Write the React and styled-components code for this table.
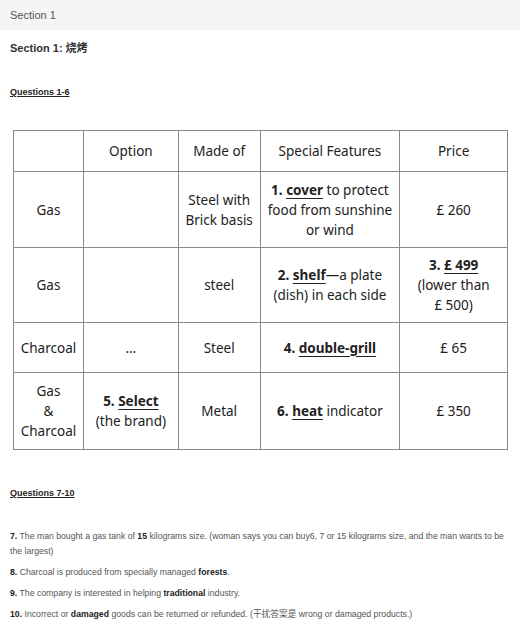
import React from 'react';
import styled, {createGlobalStyle} from 'styled-components';

const Global = createGlobalStyle`
  body {
    margin: 0;
    background: #fff;
    font-family: "Liberation Sans", Arial, "Noto Sans CJK SC", sans-serif;
  }
`

const TopBar = styled.div`
  height: 30px;
  background: #f5f5f5;
  display: flex;
  align-items: center;
  padding: 0 10px;
  font-size: 11px;
  color: #555;
`

const Body = styled.div`
  padding: 0 10px;
`

const Title = styled.div`
  font-size: 11px;
  font-weight: bold;
  color: #333;
  margin-top: 9px;
`

const SubHead = styled.div`
  font-size: 9px;
  font-weight: bold;
  color: #222;
  text-decoration: underline;
  margin-top: ${p => p.top}px;
`

const Table = styled.table`
  border-collapse: collapse;
  margin: ${p => p.top}px 0 0 3px;
  width: 495px;
  font-family: "Noto Sans", "Open Sans", sans-serif;
  font-size: 13.5px;
  color: #222;
  line-height: 20px;
  td {
    border: 1px solid #8a8a8a;
    text-align: center;
    vertical-align: middle;
    padding: 0 4px;
  }
`

const Row = styled.tr`
  height: ${p => p.h}px;
`

const Key = styled.span`
  font-weight: bold;
  text-decoration: underline;
  text-underline-offset: 3px;
`

const Num = styled.b``

const List = styled.div`
  margin-top: 31px;
  display: flex;
  flex-direction: column;
  gap: 6px;
  font-size: 8.7px;
  line-height: 15px;
  color: #555;
  b {
    color: #222;
  }
`

const Item = styled.p`
  margin: 0;
`

export default function App() {
  return (
    <>
      <Global />
      <TopBar>Section 1</TopBar>
      <Body>
        <Title>Section 1: 烧烤</Title>
        <SubHead top={32}>Questions 1-6</SubHead>
        <Table top={33}>
          <colgroup>
            <col style={{width: 70}} />
            <col style={{width: 95}} />
            <col style={{width: 82}} />
            <col style={{width: 140}} />
            <col style={{width: 108}} />
          </colgroup>
          <tbody>
            <Row h={41}>
              <td></td>
              <td>Option</td>
              <td>Made of</td>
              <td>Special Features</td>
              <td>Price</td>
            </Row>
            <Row h={76}>
              <td>Gas</td>
              <td></td>
              <td>Steel with<br />Brick basis</td>
              <td><Num>1. </Num><Key>cover</Key> to protect<br />food from sunshine<br />or wind</td>
              <td>£ 260</td>
            </Row>
            <Row h={75}>
              <td>Gas</td>
              <td></td>
              <td>steel</td>
              <td><Num>2. </Num><Key>shelf</Key>—a plate<br />(dish) in each side</td>
              <td><Num>3. </Num> <Key>£ 499</Key><br />(lower than<br />£ 500)</td>
            </Row>
            <Row h={50}>
              <td>Charcoal</td>
              <td>…</td>
              <td>Steel</td>
              <td><Num>4. </Num><Key>double-grill</Key></td>
              <td>£ 65</td>
            </Row>
            <Row h={77}>
              <td>Gas<br />&amp;<br />Charcoal</td>
              <td><Num>5. </Num> <Key>Select</Key><br />(the brand)</td>
              <td>Metal</td>
              <td><Num>6. </Num><Key>heat</Key> indicator</td>
              <td>£ 350</td>
            </Row>
          </tbody>
        </Table>
        <SubHead top={38}>Questions 7-10</SubHead>
        <List>
          <Item><b>7.</b> The man bought a gas tank of <b>15</b> kilograms size. (woman says you can buy6, 7 or 15 kilograms size, and the man wants to be the largest)</Item>
          <Item><b>8.</b> Charcoal is produced from specially managed <b>forests</b>.</Item>
          <Item><b>9.</b> The company is interested in helping <b>traditional</b> industry.</Item>
          <Item><b>10.</b> Incorrect or <b>damaged</b> goods can be returned or refunded. (干扰答案是 wrong or damaged products.)</Item>
        </List>
      </Body>
    </>
  );
}
